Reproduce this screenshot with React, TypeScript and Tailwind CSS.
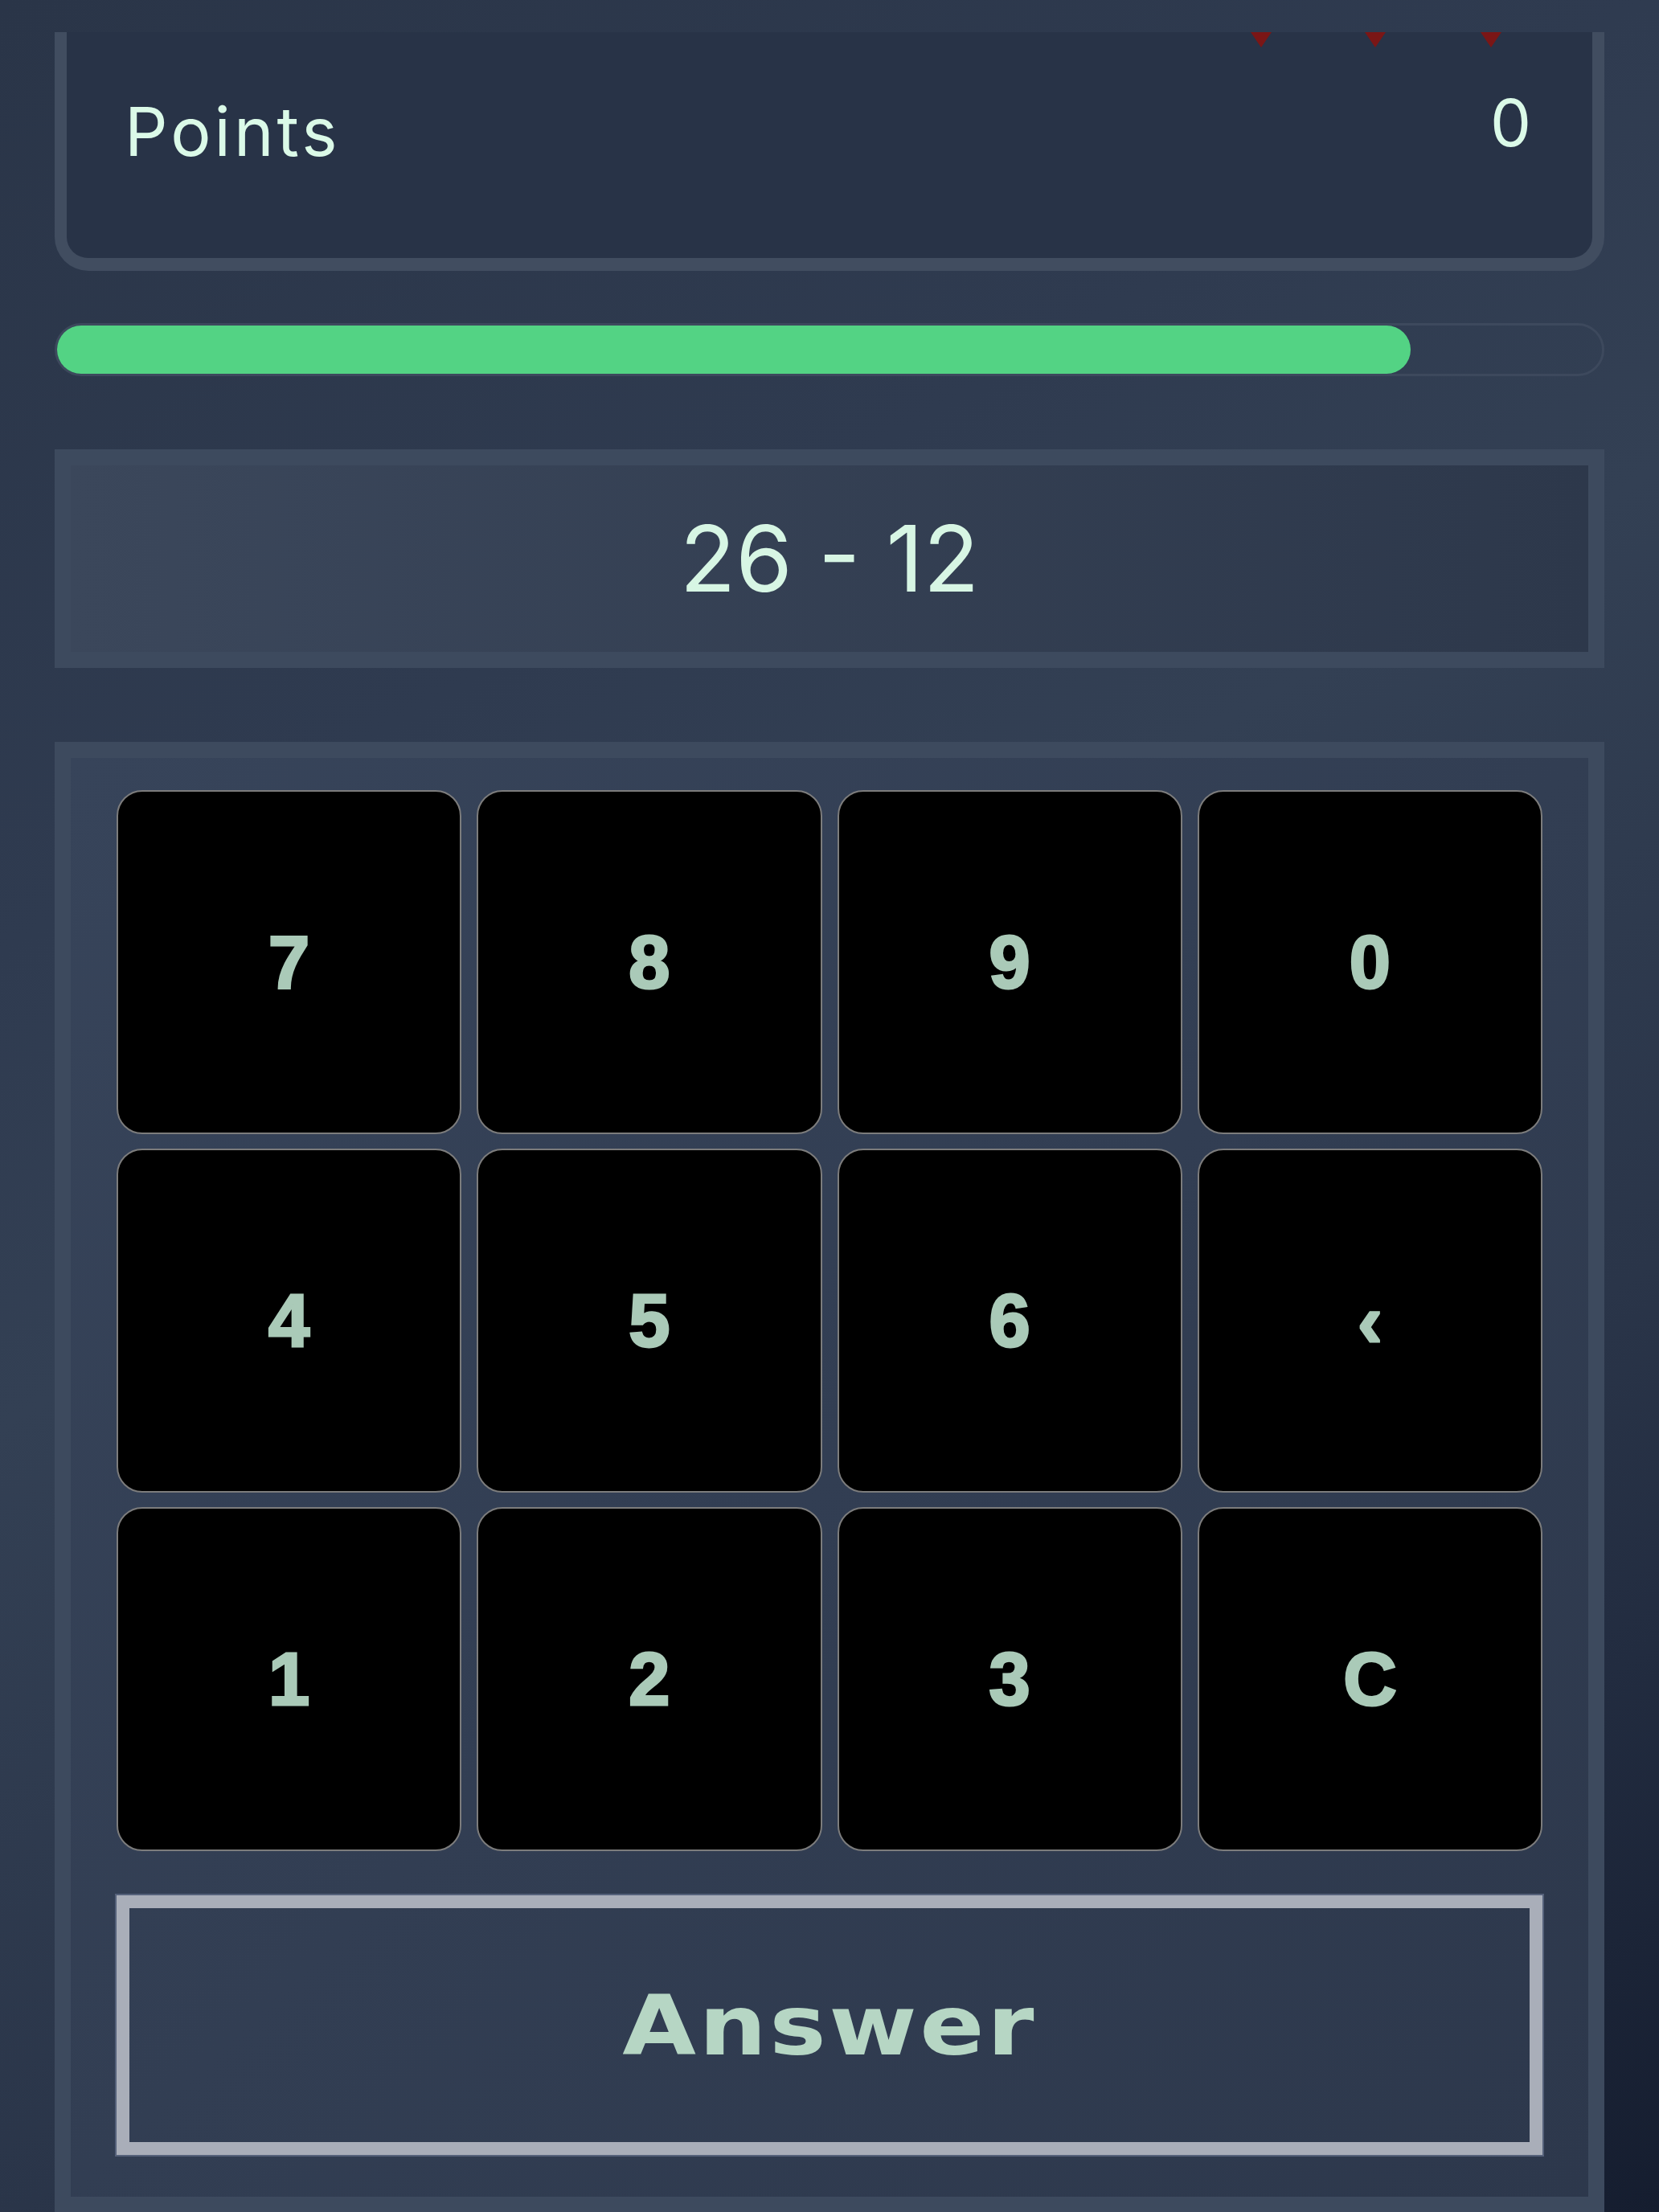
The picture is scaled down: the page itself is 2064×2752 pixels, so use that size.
import React from "react";

const keys = ["7", "8", "9", "0", "4", "5", "6", "‹", "1", "2", "3", "C"];

// red tips of the lives row that sits under the header
const tips = [1486, 1628, 1772];

const App = () => {
  const progress = 87.6;

  return (
    <div className="min-h-screen w-full overflow-hidden bg-[linear-gradient(150deg,#2a3548_0%,#2f3b50_30%,#334054_45%,#2a3549_70%,#222c40_82%,#151d2f_100%)] font-['Inter',sans-serif]">
      <div className="px-[68px] pt-[40px]">
        {/* Points card (top is scrolled under the header) */}
        <div className="relative h-[297px] rounded-b-[42px] border-x-[15px] border-b-[16px] border-[#414d60] bg-[#283347]">
          {tips.map((x) => (
            <svg
              key={x}
              className="absolute top-0"
              style={{ left: x - 13 }}
              width="26"
              height="19"
              viewBox="0 0 26 19"
            >
              <polygon points="0,0 26,0 13,19" fill="#7a1616" />
            </svg>
          ))}
          <div className="flex justify-between pl-[72px] pr-[76px] leading-none text-[#dbfae8]">
            <span className="mt-[82px] text-[84px] tracking-[4px]">Points</span>
            <span className="mt-[73px] text-[81px]">0</span>
          </div>
        </div>

        {/* Timer bar */}
        <div className="mt-[65px] h-[66px] rounded-full border-[3px] border-[#3d495d]">
          <div
            className="h-full rounded-full bg-[#53d384]"
            style={{ width: `${progress}%` }}
          />
        </div>

        {/* Question */}
        <div className="mt-[91px] flex h-[272px] items-center justify-center border-[20px] border-[#3d4a5e] bg-gradient-to-r from-[#3b475b] to-[#2d384b]">
          <span className="text-[114px] leading-none text-[#d7f6e4]">26 - 12</span>
        </div>

        {/* Keypad */}
        <div className="mt-[92px] border-[20px] border-[#3d4a5e] bg-gradient-to-br from-[#37445a] to-[#2d384c] px-[57px] pt-[40px] pb-[52px]">
          <div className="grid grid-cols-4 gap-x-[19px] gap-y-[18px]">
            {keys.map((k) => (
              <button
                key={k}
                className="flex h-[428px] items-center justify-center rounded-[32px] border-2 border-[#7c7c7c] bg-black font-['Liberation_Sans',sans-serif] text-[92px] font-bold leading-none text-[#aacab8] [-webkit-text-stroke:3px_#aacab8]"
              >
                {k}
              </button>
            ))}
          </div>
          <button className="mt-[55px] flex h-[323px] w-full items-center justify-center border-[16px] border-[#a9aeb9] outline-2 outline-[#55617a]">
            <span className="scale-x-[1.14] font-['DejaVu_Sans',sans-serif] text-[104px] font-bold leading-none tracking-[3px] text-[#b6d6c4]">
              Answer
            </span>
          </button>
        </div>
      </div>
    </div>
  );
};

export default App;
